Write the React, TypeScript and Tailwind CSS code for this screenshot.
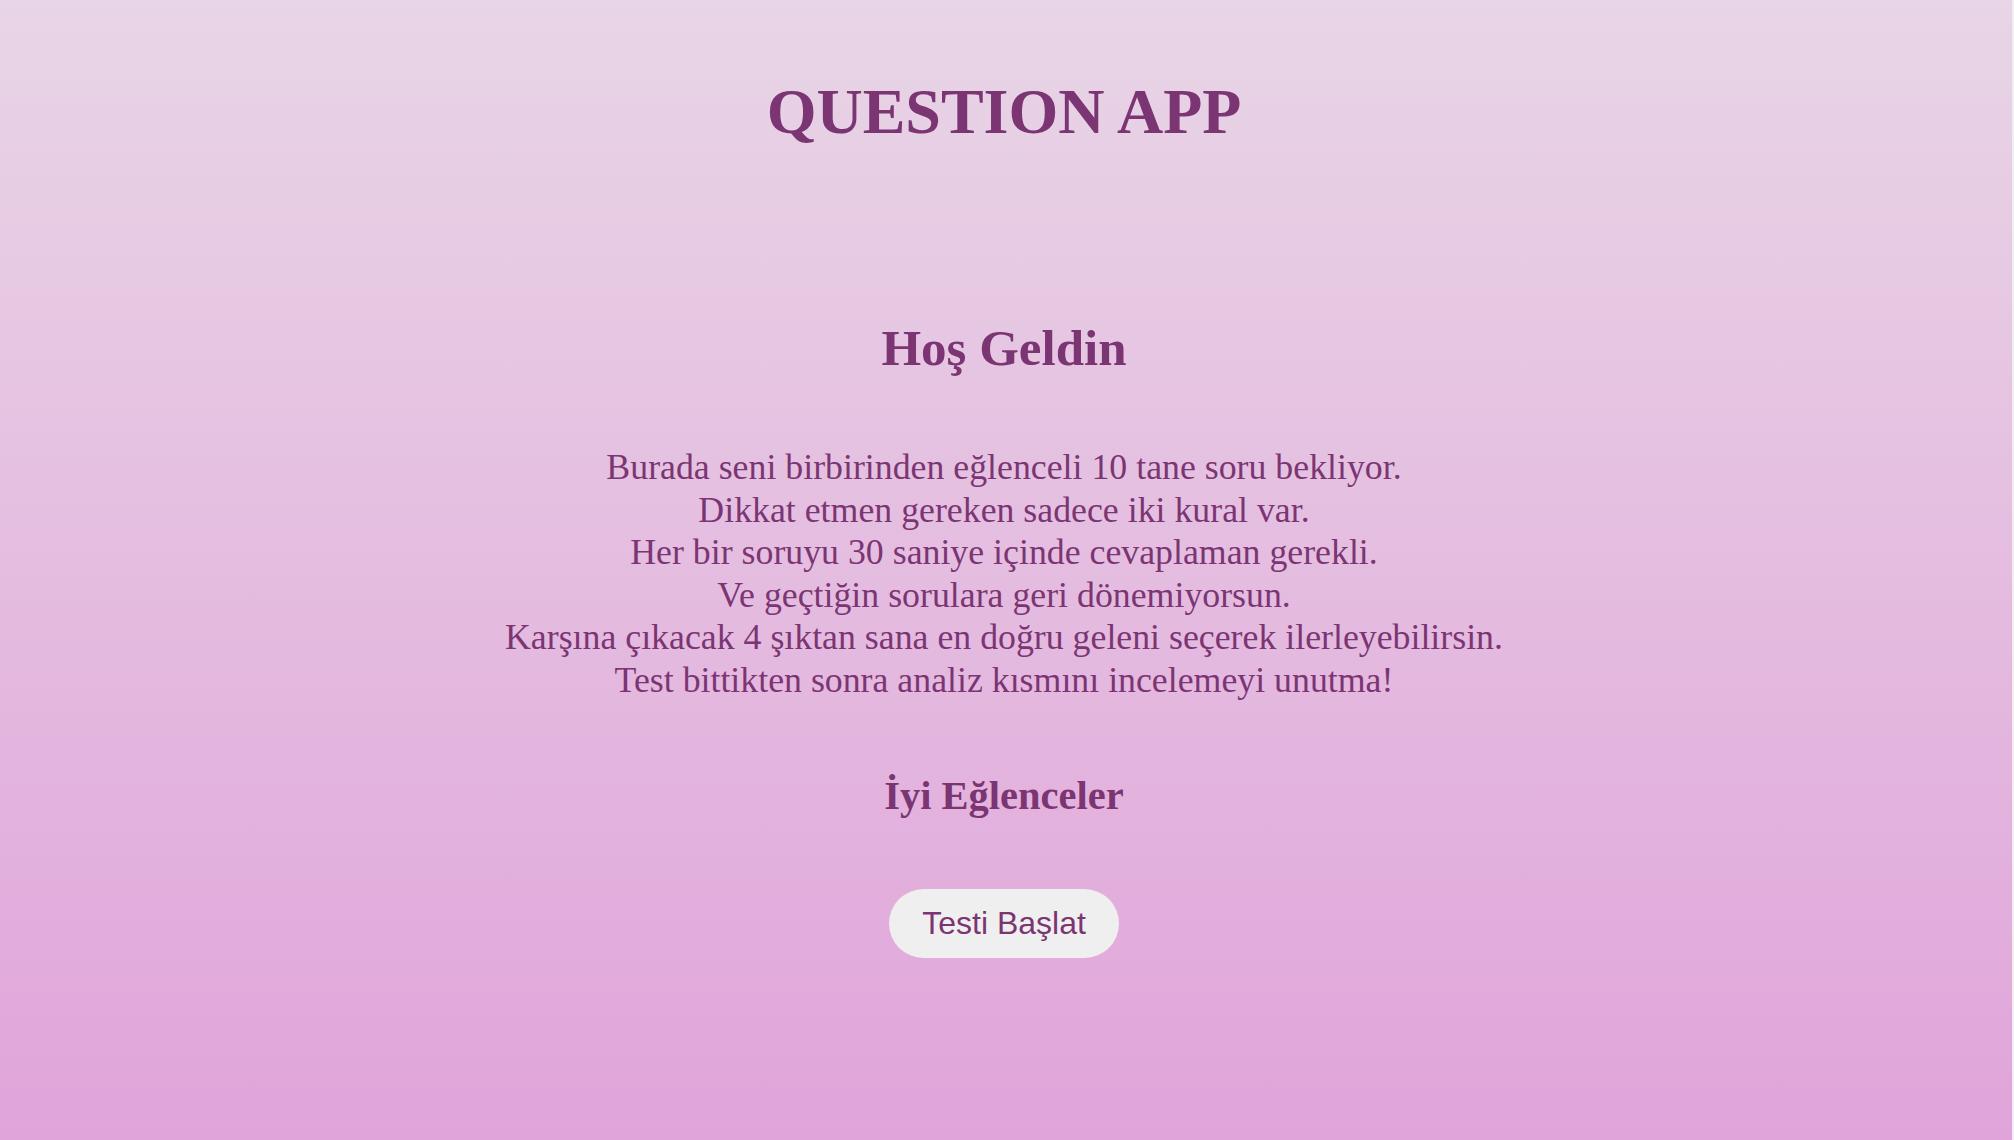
export default function App() {
  const lines = [
    'Burada seni birbirinden eğlenceli 10 tane soru bekliyor.',
    'Dikkat etmen gereken sadece iki kural var.',
    'Her bir soruyu 30 saniye içinde cevaplaman gerekli.',
    'Ve geçtiğin sorulara geri dönemiyorsun.',
    'Karşına çıkacak 4 şıktan sana en doğru geleni seçerek ilerleyebilirsin.',
    'Test bittikten sonra analiz kısmını incelemeyi unutma!',
  ];

  return (
    <div className="flex h-[1140px] w-full overflow-hidden">
      <main className="flex flex-1 flex-col items-center bg-gradient-to-b from-[#e8d5e6] to-[#e0a4da] pr-[4px] text-[#7c3573] [font-family:'Liberation_Serif',serif]">
        <h1 className="mt-[72px] text-[64px] font-bold leading-[80px]">QUESTION APP</h1>

        <h2 className="mt-[166px] text-[51px] font-bold leading-[60px]">Hoş Geldin</h2>

        <div className="mt-[68px] text-center text-[35.8px] leading-[42.5px]">
          {lines.map((line) => (
            <p key={line}>{line}</p>
          ))}
        </div>

        <h3 className="mt-[70px] text-[40.5px] font-bold leading-[50px]">İyi Eğlenceler</h3>

        <button
          type="button"
          className="mt-[68px] rounded-full bg-[#efefef] px-[33px] py-4 text-[32px] leading-[37px] text-[#7c3573] [font-family:'Liberation_Sans',Arial,sans-serif]"
        >
          Testi Başlat
        </button>
      </main>
      <div className="w-[2px] bg-[#f1eef3]" />
    </div>
  );
}
